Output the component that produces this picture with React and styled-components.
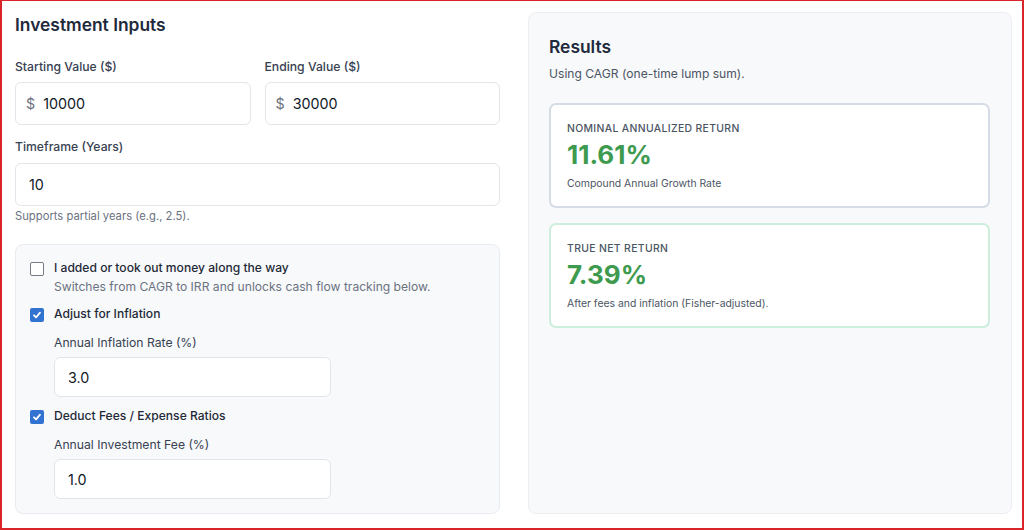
import React from 'react'
import styled, { createGlobalStyle } from 'styled-components'

const Global = createGlobalStyle`
  html, body { margin: 0; padding: 0; background: #fff; }
  body { font-family: Inter, "Noto Sans", sans-serif; color: #1f2937; }
  * { box-sizing: border-box; }
`

const Frame = styled.div`
  width: 1024px;
  height: 530px;
  border: 2px solid #d9242a;
  border-top-width: 1px;
  padding: 11px 10px 15px 13px;
  display: grid;
  grid-template-columns: 485px 484px;
  column-gap: 28px;
  overflow: hidden;
`

const Column = styled.div`
  display: flex;
  flex-direction: column;
`

const Heading = styled.h2`
  margin: 0;
  padding-top: 1px;
  font-size: 17.4px;
  line-height: 24px;
  font-weight: 600;
  color: #1e293b;
`

const FieldRow = styled.div`
  display: grid;
  grid-template-columns: 1fr 1fr;
  column-gap: 14px;
  margin-top: 20px;
`

const Field = styled.div`
  display: flex;
  flex-direction: column;
  margin-top: ${p => p.$top || 0}px;
`

const Label = styled.label`
  font-size: 12.2px;
  line-height: 20px;
  color: #374151;
  font-weight: ${p => (p.$small ? 400 : 500)};
`

const InputBox = styled.div`
  margin-top: ${p => p.$gap ?? 5}px;
  height: ${p => p.$h || 43}px;
  width: ${p => p.$w || '100%'};
  background: #fff;
  border: 1px solid #e2e5ea;
  border-radius: 6px;
  display: flex;
  align-items: center;
  padding: 0 13px 0 ${p => (p.$prefixed ? 10 : 13)}px;
  gap: 8px;
  font-size: 14.3px;
  color: #111827;
`

const Prefix = styled.span`
  color: #6b7280;
  font-size: 14.3px;
`

const Hint = styled.div`
  margin-top: 2px;
  font-size: 11.25px;
  line-height: 16px;
  color: #6b7280;
`

const OptionsBox = styled.div`
  margin-top: 20px;
  flex: 1;
  background: #f8f9fb;
  border: 1px solid #e8ebef;
  border-radius: 8px;
  padding: 13px 14px 14px 14px;
  display: flex;
  flex-direction: column;
`

const CheckRow = styled.div`
  display: flex;
  align-items: flex-start;
  gap: 10px;
  margin-top: ${p => p.$top || 0}px;
`

const Box = styled.span`
  flex: none;
  width: 14px;
  height: 14px;
  margin-top: 4px;
  border-radius: 2px;
  border: ${p => (p.$on ? 'none' : '1.5px solid #767b85')};
  background: ${p => (p.$on ? '#3272d0' : '#fff')};
  display: flex;
  align-items: center;
  justify-content: center;
`

const CheckText = styled.div`
  display: flex;
  flex-direction: column;
`

const CheckLabel = styled.span`
  font-size: 12.1px;
  line-height: 20px;
  font-weight: 500;
  color: #1f2937;
`

const CheckSub = styled.span`
  font-size: 12.1px;
  line-height: 18px;
  color: #6b7280;
`

const Nested = styled.div`
  margin-left: 24px;
  margin-top: 9px;
  display: flex;
  flex-direction: column;
`

const Panel = styled.div`
  background: #f8f9fb;
  border: 1px solid #eceef2;
  border-radius: 8px;
  padding: 21px 21px 0 20px;
  display: flex;
  flex-direction: column;
`

const Sub = styled.p`
  margin: 5px 0 0;
  font-size: 12.1px;
  line-height: 20px;
  color: #4b5563;
`

const Card = styled.div`
  margin-top: ${p => p.$top}px;
  background: #fff;
  border: 2px solid ${p => p.$border};
  border-radius: 7px;
  padding: 16px 17px 14px 16px;
  display: flex;
  flex-direction: column;
`

const CardLabel = styled.span`
  font-size: 10.4px;
  line-height: 16px;
  letter-spacing: 0.35px;
  text-transform: uppercase;
  color: #4b5563;
  font-weight: 500;
`

const CardValue = styled.span`
  font-size: 26px;
  line-height: 32px;
  font-weight: 700;
  color: #3e9a4e;
  margin-top: 2px;
`

const CardDesc = styled.span`
  margin-top: 5px;
  font-size: 10.4px;
  line-height: 16px;
  color: #4b5563;
`

const Check = ({ on }) => (
  <Box $on={on}>
    {on && (
      <svg width="10" height="10" viewBox="0 0 10 10">
        <path d="M2 5.3 L4.1 7.4 L8 2.6" fill="none" stroke="#fff" strokeWidth="1.8" strokeLinecap="round" strokeLinejoin="round" />
      </svg>
    )}
  </Box>
)

const ResultCard = ({ top, border, label, value, desc }) => (
  <Card $top={top} $border={border}>
    <CardLabel>{label}</CardLabel>
    <CardValue>{value}</CardValue>
    <CardDesc>{desc}</CardDesc>
  </Card>
)

export default function App() {
  return (
    <>
      <Global />
      <Frame>
        <Column>
          <Heading>Investment Inputs</Heading>
          <FieldRow>
            <Field>
              <Label>Starting Value ($)</Label>
              <InputBox $prefixed><Prefix>$</Prefix>10000</InputBox>
            </Field>
            <Field>
              <Label>Ending Value ($)</Label>
              <InputBox $prefixed><Prefix>$</Prefix>30000</InputBox>
            </Field>
          </FieldRow>
          <Field $top={12}>
            <Label>Timeframe (Years)</Label>
            <InputBox $gap={6}>10</InputBox>
            <Hint>Supports partial years (e.g., 2.5).</Hint>
          </Field>
          <OptionsBox>
            <CheckRow>
              <Check on={false} />
              <CheckText>
                <CheckLabel>I added or took out money along the way</CheckLabel>
                <CheckSub>Switches from CAGR to IRR and unlocks cash flow tracking below.</CheckSub>
              </CheckText>
            </CheckRow>
            <CheckRow $top={8}>
              <Check on />
              <CheckLabel>Adjust for Inflation</CheckLabel>
            </CheckRow>
            <Nested>
              <Label $small>Annual Inflation Rate (%)</Label>
              <InputBox $gap={4} $h={40} $w="277px">3.0</InputBox>
            </Nested>
            <CheckRow $top={9}>
              <Check on />
              <CheckLabel>Deduct Fees / Expense Ratios</CheckLabel>
            </CheckRow>
            <Nested>
              <Label $small>Annual Investment Fee (%)</Label>
              <InputBox $gap={4} $h={40} $w="277px">1.0</InputBox>
            </Nested>
          </OptionsBox>
        </Column>
        <Panel>
          <Heading>Results</Heading>
          <Sub>Using CAGR (one-time lump sum).</Sub>
          <ResultCard
            top={19}
            border="#d6dce6"
            label="Nominal Annualized Return"
            value="11.61%"
            desc="Compound Annual Growth Rate"
          />
          <ResultCard
            top={15}
            border="#cdeedc"
            label="True Net Return"
            value="7.39%"
            desc="After fees and inflation (Fisher-adjusted)."
          />
        </Panel>
      </Frame>
    </>
  )
}
